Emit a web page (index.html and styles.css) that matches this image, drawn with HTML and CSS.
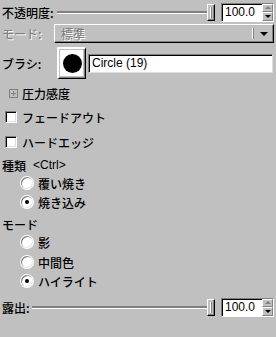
FILE: index.html
```html
<!DOCTYPE html>
<html lang="ja">
<head>
  <meta charset="UTF-8">
  <title>覆い焼き/焼き込み</title>
  <link rel="stylesheet" href="styles.css">
</head>
<body>
  <div class="panel">
    <div class="row row-opacity">
      <span class="label label-opacity">不透明度:</span>
      <div class="scale">
        <div class="trough"></div>
        <div class="handle"></div>
      </div>
      <div class="spin">
        <span class="spin-value">100.0</span>
        <div class="spin-arrows">
          <span class="arrow arrow-up off"></span>
          <span class="arrow arrow-down"></span>
        </div>
      </div>
    </div>

    <div class="row row-mode">
      <span class="label label-mode disabled">モード:</span>
      <div class="combo">
        <span class="combo-text disabled">標準</span>
        <span class="combo-sep"></span>
        <span class="combo-arrow"></span>
      </div>
    </div>

    <div class="row row-brush">
      <span class="label label-brush">ブラシ:</span>
      <div class="brush-box"><div class="brush-dot"></div></div>
      <div class="brush-entry">Circle (19)</div>
    </div>

    <div class="row row-expander">
      <span class="expander"></span>
      <span>圧力感度</span>
    </div>

    <div class="row row-check first-check">
      <span class="check"></span>
      <span>フェードアウト</span>
    </div>
    <div class="row row-check second-check">
      <span class="check"></span>
      <span>ハードエッジ</span>
    </div>

    <div class="row row-title type-title">
      <span>種類</span>
      <span class="hint">&lt;Ctrl&gt;</span>
    </div>
    <div class="row row-radio r1">
      <span class="radio"></span>
      <span>覆い焼き</span>
    </div>
    <div class="row row-radio r2">
      <span class="radio on"></span>
      <span>焼き込み</span>
    </div>

    <div class="row row-title mode-title">
      <span>モード</span>
    </div>
    <div class="row row-radio r1">
      <span class="radio"></span>
      <span>影</span>
    </div>
    <div class="row row-radio r3">
      <span class="radio"></span>
      <span>中間色</span>
    </div>
    <div class="row row-radio r2">
      <span class="radio on"></span>
      <span>ハイライト</span>
    </div>

    <div class="row row-exposure">
      <span class="label label-exposure">露出:</span>
      <div class="scale">
        <div class="trough"></div>
        <div class="handle"></div>
      </div>
      <div class="spin">
        <span class="spin-value">100.0</span>
        <div class="spin-arrows">
          <span class="arrow arrow-up off"></span>
          <span class="arrow arrow-down"></span>
        </div>
      </div>
    </div>
  </div>
</body>
</html>
```

FILE: styles.css
```css
html, body {
  margin: 0;
  background: #c0c0c0;
}
body {
  width: 276px;
  height: 337px;
  overflow: hidden;
  font-family: "Noto Sans CJK JP", "Liberation Sans", sans-serif;
  font-size: 12px;
  font-weight: 500;
  color: #000;
}
.panel {
  display: flex;
  flex-direction: column;
  padding: 0 2px;
}
.row {
  display: flex;
  align-items: center;
  height: 16px;
  white-space: nowrap;
}
.disabled {
  color: #808080;
  text-shadow: 1px 1px 0 #fff;
}

/* scale rows */
.row-opacity {
  margin-top: 3px;
  height: 18px;
}
.row-exposure {
  margin-top: 9px;
  height: 18px;
}
.label-opacity {
  width: 55px;
}
.label-exposure {
  width: 30px;
}
.scale {
  flex: 1;
  display: flex;
  align-items: center;
  height: 18px;
}
.trough {
  flex: 1;
  height: 2px;
  background: #808080;
  border-bottom: 1px solid #fff;
}
.handle {
  width: 6px;
  height: 15px;
  background: #c0c0c0;
  border-top: 1px solid #fff;
  border-left: 1px solid #fff;
  border-right: 1px solid #000;
  border-bottom: 1px solid #000;
  box-shadow: inset -1px -1px 0 #808080;
  position: relative;
}
.handle::after {
  content: "";
  position: absolute;
  left: 2px;
  top: 2px;
  width: 1px;
  height: 11px;
  background: #fff;
  border-right: 1px solid #808080;
}
.spin {
  margin-left: 6px;
  width: 51px;
  height: 17px;
  display: flex;
  background: #fff;
  border-top: 1px solid #808080;
  border-left: 1px solid #808080;
  border-right: 1px solid #fff;
  border-bottom: 1px solid #fff;
  box-shadow: inset 1px 1px 0 #000;
}
.spin-value {
  flex: 1;
  padding-left: 3px;
  font-family: "Liberation Sans", sans-serif;
  font-weight: 400;
  font-size: 12px;
  line-height: 17px;
}
.spin-arrows {
  width: 11px;
  display: flex;
  flex-direction: column;
  background: #c0c0c0;
}
.arrow {
  flex: 1;
  display: flex;
  align-items: center;
  justify-content: center;
  border-top: 1px solid #fff;
  border-left: 1px solid #fff;
  border-bottom: 1px solid #808080;
  border-right: 1px solid #808080;
}
.arrow::before {
  content: "";
  border-left: 3px solid transparent;
  border-right: 3px solid transparent;
}
.arrow-up::before {
  border-bottom: 3px solid #000;
}
.arrow-down::before {
  border-top: 3px solid #000;
}
.arrow.off::before {
  border-bottom-color: #808080;
}

/* mode combo */
.row-mode {
  margin-top: 3px;
  height: 19px;
}
.label-mode {
  width: 52px;
}
.combo {
  flex: 1;
  height: 19px;
  box-sizing: border-box;
  display: flex;
  align-items: center;
  border-top: 1px solid #fff;
  border-left: 1px solid #fff;
  border-right: 1px solid #000;
  border-bottom: 1px solid #000;
  box-shadow: inset -1px -1px 0 #808080;
}
.combo-text {
  flex: 1;
  padding-left: 6px;
}
.combo-sep {
  width: 1px;
  height: 11px;
  background: #fff;
  border-right: 1px solid #808080;
  margin-right: 6px;
}
.combo-arrow {
  width: 0;
  height: 0;
  border-left: 4px solid transparent;
  border-right: 4px solid transparent;
  border-top: 4px solid #000;
  margin-right: 5px;
}

/* brush */
.row-brush {
  margin-top: 4px;
  height: 32px;
}
.label-brush {
  width: 55px;
}
.brush-box {
  width: 29px;
  height: 32px;
  box-sizing: border-box;
  display: flex;
  align-items: center;
  justify-content: center;
  background: #fff;
  border-top: 2px solid #fff;
  border-left: 2px solid #fff;
  border-right: 1px solid #000;
  border-bottom: 1px solid #000;
  box-shadow: inset -1px -1px 0 #808080;
  outline: 1px solid #c0c0c0;
  outline-offset: -3px;
}
.brush-dot {
  width: 19px;
  height: 19px;
  border-radius: 50%;
  background: #000;
}
.brush-entry {
  flex: 1;
  margin-left: 2px;
  height: 19px;
  box-sizing: border-box;
  padding-left: 3px;
  background: #fff;
  border-top: 1px solid #808080;
  border-left: 1px solid #808080;
  border-right: 1px solid #dfdfdf;
  border-bottom: 1px solid #dfdfdf;
  box-shadow: inset 1px 1px 0 #000;
  font-family: "Liberation Sans", sans-serif;
  font-weight: 400;
  line-height: 17px;
  margin-right: 1px;
}

/* expander */
.row-expander {
  margin-top: 6px;
  padding-left: 7px;
}
.expander {
  width: 7px;
  height: 7px;
  border: 1px solid #808080;
  margin-right: 4px;
  position: relative;
}
.expander::before {
  content: "";
  position: absolute;
  left: 1px;
  top: 3px;
  width: 5px;
  height: 1px;
  background: #808080;
}
.expander::after {
  content: "";
  position: absolute;
  left: 3px;
  top: 1px;
  width: 1px;
  height: 5px;
  background: #808080;
}

/* checkboxes */
.row-check {
  padding-left: 3px;
}
.first-check {
  margin-top: 8px;
}
.second-check {
  margin-top: 9px;
}
.check {
  width: 12px;
  height: 12px;
  box-sizing: border-box;
  background: #fff;
  border-top: 1px solid #808080;
  border-left: 1px solid #808080;
  border-right: 1px solid #fff;
  border-bottom: 1px solid #fff;
  box-shadow: inset 1px 1px 0 #000, inset -1px -1px 0 #dfdfdf;
  margin-right: 5px;
}

/* radio groups */
.row-title {
  margin-top: 7px;
}
.mode-title {
  margin-top: 6px;
}
.hint {
  margin-left: 7px;
  font-family: "Liberation Sans", sans-serif;
  font-weight: 400;
}
.row-radio {
  padding-left: 19px;
}
.r1 {
  margin-top: 2px;
}
.r2 {
  margin-top: 3px;
}
.r3 {
  margin-top: 4px;
}
.radio {
  width: 12px;
  height: 12px;
  border-radius: 50%;
  background: #fff;
  box-shadow: inset 1px 1px 0 #808080, inset -1px -1px 0 #e8e8e8, 0 0 0 1px #fff;
  margin-right: 5px;
  display: flex;
  align-items: center;
  justify-content: center;
}
.radio.on::before {
  content: "";
  width: 4px;
  height: 4px;
  border-radius: 50%;
  background: #000;
}
```
